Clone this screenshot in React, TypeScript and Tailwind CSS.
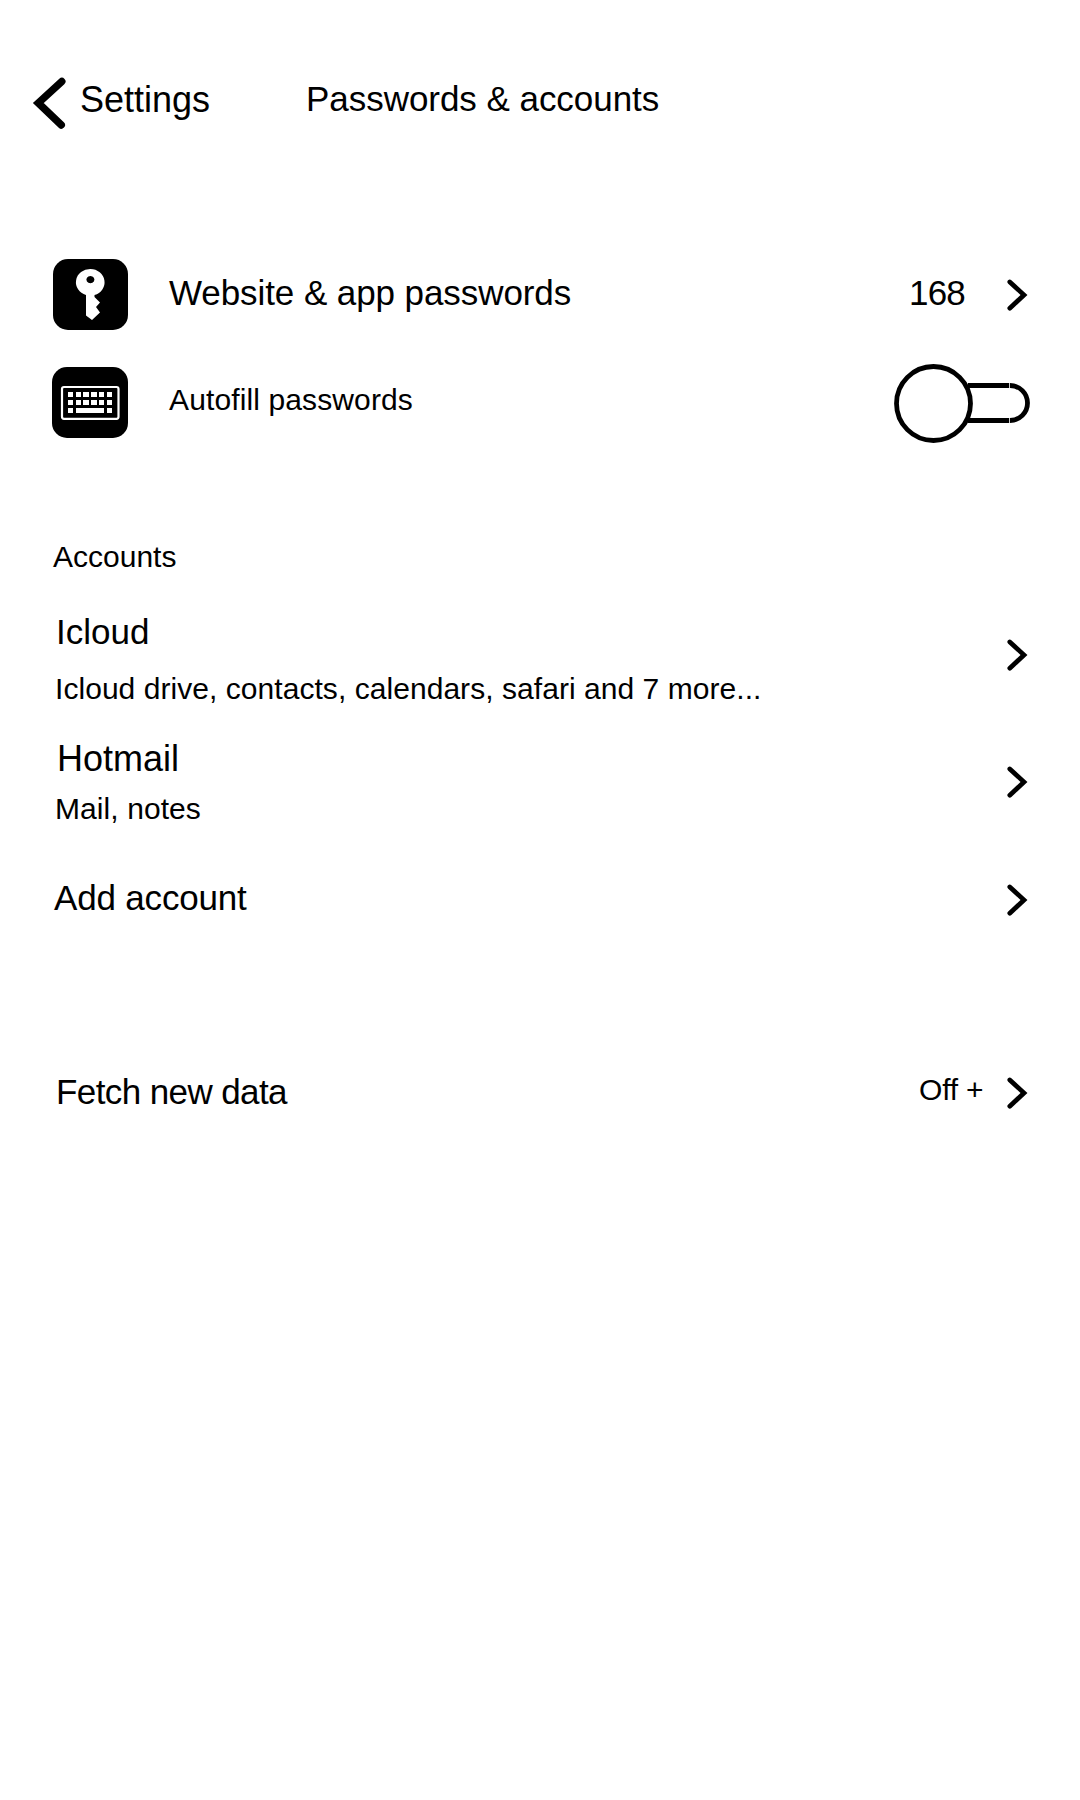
import React from "react";

function Chevron({ className = "" }: { className?: string }) {
  return (
    <svg width="22" height="34" viewBox="0 0 22 34" className={`shrink-0 ${className}`} fill="none" stroke="#000" strokeWidth="4.7" strokeLinecap="round">
      <path d="M3.800 3.900 L18 17 L3.800 30.200" strokeLinejoin="miter" />
    </svg>
  );
}

function KeyIcon() {
  return (
    <svg width="75" height="71" viewBox="0 0 75 71" className="shrink-0">
      <rect width="75" height="71" rx="15" fill="#000" />
      <path
        fill="#fff"
        fillRule="evenodd"
        d="M37.500 10a14.300 13.300 0 0 1 4 26v2l5.500 5.500-4 4.500 4 5.500-8 7.500-6-4.500V36a14.300 13.300 0 0 1 4.500-26ZM37.400 17a4 3.600 0 1 0 .01 0Z"
      />
    </svg>
  );
}

const keyColumns = [16, 24, 31, 39, 47, 55];

function KeyboardIcon() {
  return (
    <svg width="76" height="71" viewBox="0 0 76 71" className="shrink-0">
      <rect width="76" height="71" rx="15" fill="#000" />
      <rect x="10" y="20" width="56.500" height="31.800" rx="2" fill="none" stroke="#fff" strokeWidth="2.200" />
      <g fill="#fff">
        {keyColumns.map((x, i) => (
          <React.Fragment key={x}>
            <rect x={x} y="25" width={i === 2 || i === 3 ? 6 : 5} height="5" />
            <rect x={x} y="33" width={i === 2 || i === 3 ? 6 : 5} height="5" />
          </React.Fragment>
        ))}
        <rect x="16" y="41" width="5" height="5" />
        <rect x="24" y="41" width="28" height="5" />
        <rect x="55" y="41" width="5" height="5" />
      </g>
    </svg>
  );
}

function Toggle() {
  return (
    <svg width="138" height="80" viewBox="0 0 138 80" className="shrink-0" fill="none" stroke="#000" strokeWidth="4.8">
      <path d="M74 21.500H115.200M74 56.500H115.200M116 21.500a17.500 17.500 0 0 1 0 35" />
      <circle cx="39.500" cy="39.500" r="37" fill="#fff" />
    </svg>
  );
}

export default function App() {
  return (
    <main className="flex h-[1800px] w-[1080px] flex-col overflow-hidden bg-white font-['Liberation_Sans',Arial,sans-serif] text-[35px] leading-[40px] whitespace-nowrap text-black">
      <header className="flex h-[259px] items-start pt-[77px] pl-[32px]">
        <svg width="36" height="54" viewBox="0 0 36 54" fill="none" stroke="#000" strokeWidth="7.400" strokeLinecap="round">
          <path d="M29.800 4.500 L6.300 26 L29.300 48" strokeLinejoin="miter" />
        </svg>
        <span className="mt-[3px] ml-[12px] w-[226px] text-[36px]">Settings</span>
        <h1 className="mt-[2px] tracking-[-0.04px]">Passwords &amp; accounts</h1>
      </header>

      <section className="flex flex-col gap-[37px] pl-[53px]">
        <div className="flex h-[71px] items-start">
          <KeyIcon />
          <span className="mt-[14px] ml-[41px] w-[740px] tracking-[-0.08px]">Website &amp; app passwords</span>
          <span className="mt-[14px] w-[97px] tracking-[-0.8px]">168</span>
          <Chevron className="mt-[19px]" />
        </div>
        <div className="-ml-px flex h-[71px] items-start">
          <KeyboardIcon />
          <span className="mt-[13px] ml-[41px] w-[725px] text-[30px] tracking-[0.12px]">Autofill passwords</span>
          <div className="-mt-[3px]"><Toggle /></div>
        </div>
      </section>

      <section className="mt-[99px] pl-[53px]">
        <h2 className="text-[30px]">Accounts</h2>
        <div className="mt-[35px] flex h-[127px] items-start">
          <div className="w-[953px]">
            <div className="pl-[3px]">Icloud</div>
            <div className="mt-[17px] pl-[2px] text-[30px] tracking-[0.05px]">Icloud drive, contacts, calendars, safari and 7 more...</div>
          </div>
          <Chevron className="mt-[26px]" />
        </div>
        <div className="flex h-[139px] items-start">
          <div className="w-[953px]">
            <div className="pl-[4px] text-[36px]">Hotmail</div>
            <div className="mt-[10px] pl-[2px] text-[30px] tracking-[0.08px]">Mail, notes</div>
          </div>
          <Chevron className="mt-[26px]" />
        </div>
        <div className="flex h-[194px] items-start">
          <span className="w-[953px] pl-px tracking-[-0.18px]">Add account</span>
          <Chevron className="mt-[5px]" />
        </div>
        <div className="flex items-start">
          <span className="w-[866px] pl-[3px] tracking-[-0.6px]">Fetch new data</span>
          <span className="-mt-[2px] w-[87px] text-[30px] tracking-[-0.2px]">Off +</span>
          <Chevron className="mt-[4px]" />
        </div>
      </section>
    </main>
  );
}
